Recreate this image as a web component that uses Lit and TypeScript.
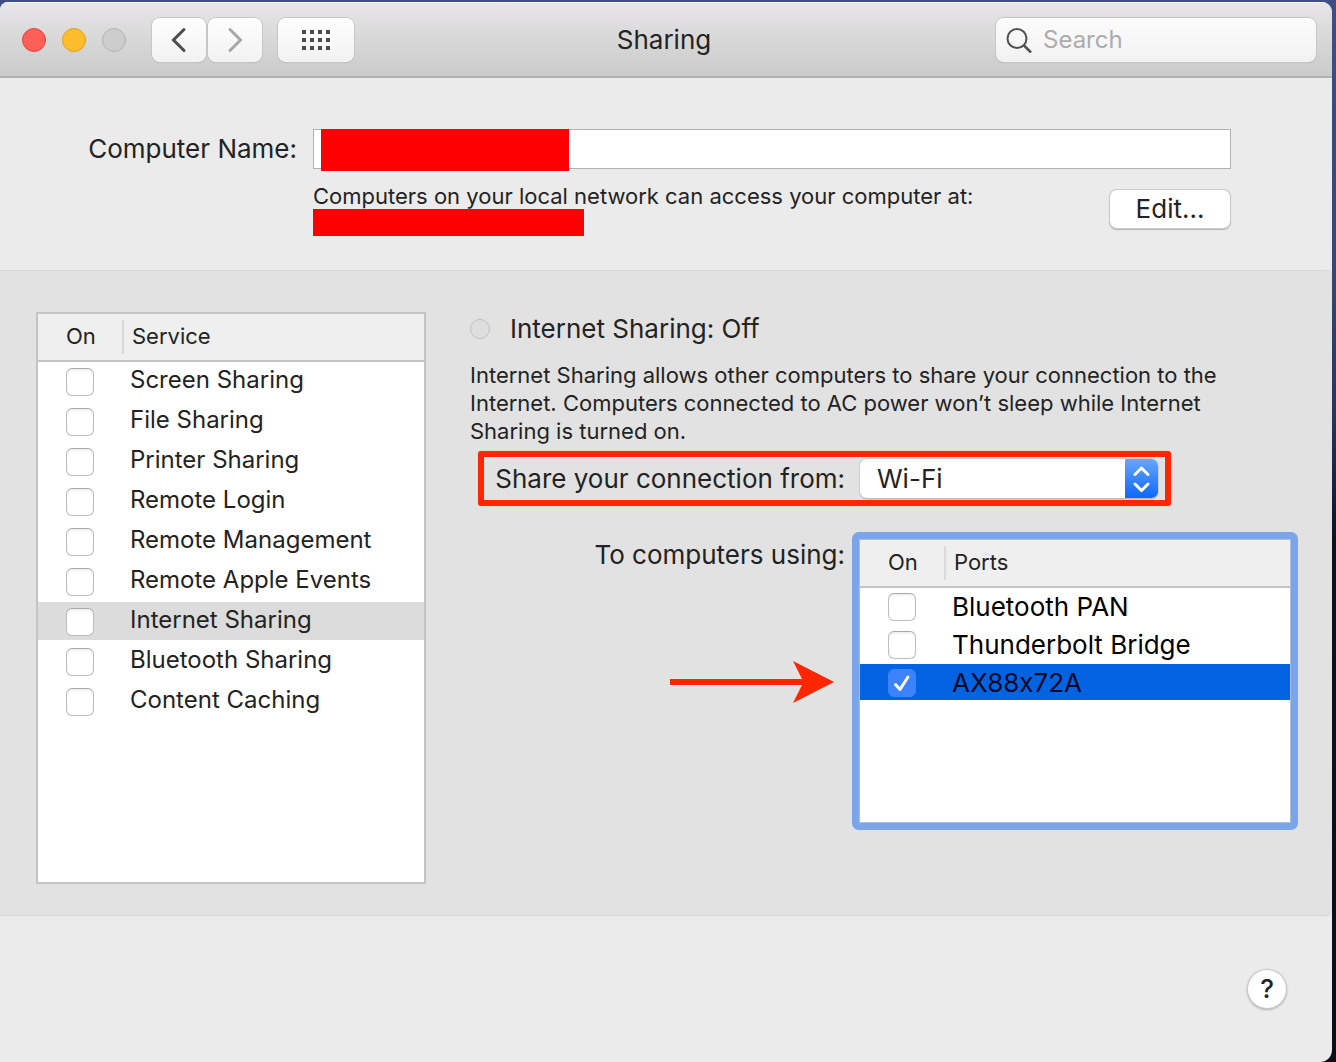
import { LitElement, html, css, svg } from "lit";
import { customElement, state } from "lit/decorators.js";
import { classMap } from "lit/directives/class-map.js";

interface Item {
  name: string;
  on: boolean;
}

const off = (name: string): Item => ({ name, on: false });

@customElement("app-root")
export class AppRoot extends LitElement {
  @state() private services: Item[] = [
    "Screen Sharing",
    "File Sharing",
    "Printer Sharing",
    "Remote Login",
    "Remote Management",
    "Remote Apple Events",
    "Internet Sharing",
    "Bluetooth Sharing",
    "Content Caching",
  ].map(off);

  @state() private ports: Item[] = [
    off("Bluetooth PAN"),
    off("Thunderbolt Bridge"),
    { name: "AX88x72A", on: true },
  ];

  static styles = css`
    :host {
      display: flex;
      box-sizing: border-box;
      min-height: 100vh;
      padding: 2px 4px 0 0;
      background: linear-gradient(#3f4f85 0, #344973 270px, #27355a 420px, #0b1226 540px, #090d1c 100%);
      font-family: Inter, "Liberation Sans", sans-serif;
      font-size: 26px;
      font-variant-ligatures: no-contextual;
      line-height: 32px;
      color: #232323;
    }
    * {
      box-sizing: border-box;
    }
    button,
    input,
    select {
      font: inherit;
      color: inherit;
      margin: 0;
      padding: 0;
    }
    .window {
      flex: 1;
      display: flex;
      flex-direction: column;
      background: #ebebeb;
      border-radius: 8px 10px 12px 0;
      overflow: hidden;
    }

    /* Title bar */
    .titlebar {
      display: grid;
      grid-template-columns: 1fr auto 1fr;
      align-items: center;
      height: 76px;
      padding: 0 16px 0 22px;
      background: linear-gradient(#e7e5e7, #cbcbcb);
      border-top: 1px solid #f6f6f6;
      border-bottom: 2px solid #b1b1b1;
    }
    .left {
      display: flex;
      align-items: center;
    }
    .lights {
      display: flex;
      gap: 16px;
      margin-right: 26px;
    }
    .light {
      width: 24px;
      height: 24px;
      border-radius: 50%;
      border: 1px solid #b4b4b4;
      background: #cdcdcd;
    }
    .close {
      background: #ff5f57;
      border-color: #e2463f;
    }
    .minimize {
      background: #ffbd2e;
      border-color: #e1a116;
    }
    .tool {
      display: flex;
      align-items: center;
      justify-content: center;
      width: 54px;
      height: 44px;
      border: 0;
      border-radius: 8px;
      background: linear-gradient(#fefefe, #f2f2f2);
      box-shadow: 0 0 0 1px #c6c6c6, 0 1px 1px #aaa;
    }
    .forward {
      margin-left: 2px;
    }
    .all {
      width: 76px;
      margin-left: 16px;
    }
    .title {
      margin: 0;
      padding-right: 10px;
      font-size: 26px;
      font-weight: 400;
    }
    .search {
      justify-self: end;
      display: flex;
      align-items: center;
      gap: 10px;
      width: 320px;
      height: 44px;
      padding: 0 10px;
      border-radius: 8px;
      background: linear-gradient(#fcfcfc, #f2f2f2);
      box-shadow: 0 0 0 1px #c6c6c6, 0 1px 1px #aaa;
    }
    .search input {
      flex: 1;
      min-width: 0;
      border: 0;
      outline: 0;
      background: none;
      font-size: 24px;
    }
    .search input::placeholder {
      color: #acacac;
      opacity: 1;
    }

    /* Computer name */
    .computer {
      display: grid;
      grid-template-columns: 297px 1fr;
      column-gap: 16px;
      row-gap: 14px;
      padding: 51px 101px 34px 0;
    }
    .computer > label {
      text-align: right;
      line-height: 40px;
    }
    .namefield {
      position: relative;
    }
    .namefield input {
      display: block;
      width: 100%;
      height: 40px;
      padding: 0 8px;
      border: 1px solid #b2b2b2;
      background: #fff;
    }
    .redact {
      background: #f00;
    }
    .redact-name {
      position: absolute;
      left: 8px;
      top: 0;
      width: 248px;
      height: 42px;
    }
    .redact-host {
      width: 271px;
      height: 27px;
    }
    .address {
      grid-column: 2;
      display: flex;
      justify-content: space-between;
      align-items: flex-start;
    }
    .small {
      margin: 0;
      font-size: 22px;
      line-height: 26px;
    }
    .edit {
      width: 120px;
      height: 38px;
      margin: 7px 1px 0 0;
      border: 0;
      border-radius: 7px;
      background: #fff;
      box-shadow: 0 0 0 1px #cacaca, 0 1px 1px 1px #b4b4b4;
    }

    /* Main panel */
    .panel {
      display: flex;
      gap: 44px;
      padding: 41px 34px 31px 36px;
      background: #e2e2e2;
      border: solid #d6d6d6;
      border-width: 1px 0;
      border-radius: 0 6px 6px 0;
    }
    .services {
      flex: 0 0 390px;
      min-height: 572px;
      border: 2px solid #c4c4c4;
      background: #fff;
    }
    table {
      width: 100%;
      border-collapse: separate;
      border-spacing: 0;
      table-layout: fixed;
    }
    th {
      height: 48px;
      padding: 0;
      background: #efefef;
      border-bottom: 2px solid #c4c4c4;
      font-size: 22px;
      font-weight: 400;
      text-align: left;
    }
    th:first-child {
      width: 84px;
    }
    th span {
      display: block;
      padding-bottom: 2px;
    }
    th:first-child span {
      padding-left: 28px;
    }
    th:last-child span {
      border-left: 2px solid #dadada;
      padding-left: 8px;
    }
    td {
      padding: 0;
      background-clip: padding-box;
      border-bottom: 2px solid #fff;
    }
    td:first-child {
      padding-left: 28px;
    }
    td:last-child {
      padding-left: 8px;
    }
    td label {
      display: block;
      white-space: nowrap;
    }
    .services td {
      height: 40px;
      font-size: 24px;
      line-height: 36px;
      vertical-align: top;
    }
    .services td:first-child {
      padding-top: 6px;
    }
    .services .selected td {
      background-color: #dcdcdc;
    }
    .check {
      appearance: none;
      display: block;
      width: 28px;
      height: 28px;
      border: 1px solid #bdbdbd;
      border-top-color: #a9a9a9;
      border-radius: 6px;
      background: #fff;
      box-shadow: inset 0 2px 2px #f0f0f0;
    }
    .check:checked {
      border-color: #3b82fb;
      box-shadow: none;
      background: #3b82fb;
    }
    .tick {
      display: grid;
      width: 28px;
    }
    .tick > * {
      grid-area: 1 / 1;
    }
    .tick svg {
      pointer-events: none;
    }

    .detail {
      flex: 1;
      min-width: 0;
      padding-top: 1px;
    }
    .status {
      display: flex;
      align-items: center;
      gap: 20px;
    }
    .status h2 {
      margin: 0;
      font-size: 26px;
      font-weight: 400;
    }
    .dot {
      width: 20px;
      height: 20px;
      border: 1px solid #c0c0c0;
      border-radius: 50%;
      background: #dedede;
    }
    .about {
      margin-top: 16px;
      line-height: 28px;
      max-width: 770px;
    }
    .source {
      display: flex;
      align-items: center;
      width: fit-content;
      margin: 6px 0 0 8px;
      padding: 2px 7px 1px 0;
      border: 6px solid #ff2600;
      border-radius: 3px;
      box-shadow: 0 0 1px #ff8a75;
    }
    .source label {
      width: 361px;
      margin-right: 15px;
      text-align: right;
    }
    .popup {
      display: grid;
      grid-template-columns: 1fr 33px;
      width: 298px;
      height: 40px;
      border-radius: 7px;
      overflow: hidden;
      background: #fff;
      border-bottom: 1px solid #bbb;
      box-shadow: 0 0 0 1px #cdcdcd;
    }
    .popup select {
      grid-area: 1 / 1 / 2 / 3;
      appearance: none;
      border: 0;
      padding-left: 17px;
      background: none;
    }
    .stepper {
      grid-area: 1 / 2;
      height: 40px;
      background: linear-gradient(#68a6fb, #0a66fb);
      pointer-events: none;
    }
    .targets {
      display: flex;
      gap: 7px;
      margin-top: 26px;
    }
    .to {
      display: flex;
      flex-direction: column;
      align-items: flex-end;
      width: 375px;
      padding-top: 7px;
    }
    .arrow {
      margin: 90px 11px 0 0;
    }
    .ports {
      flex: 1;
      height: 298px;
      padding: 1px;
      border: 7px solid #7aa5ea;
      border-radius: 7px;
      background: #fff;
      box-shadow: inset 0 0 0 1px #a9bde0;
    }
    .ports td {
      height: 38px;
      padding-top: 2px;
      color: #000;
      vertical-align: middle;
    }
    .ports .selected td {
      background-color: #0463e1;
      color: #00091f;
    }

    .footer {
      flex: 1;
      display: flex;
      justify-content: flex-end;
      align-items: flex-start;
      padding: 54px 46px 53px;
    }
    .help {
      width: 38px;
      height: 38px;
      border: 0;
      border-radius: 50%;
      background: #fff;
      box-shadow: 0 0 0 1px #cacaca, 0 1px 2px 1px #b0b0b0;
      font-weight: 500;
    }
  `;

  private toggle(list: "services" | "ports", i: number) {
    this[list] = this[list].map((it, n) => (n === i ? { ...it, on: !it.on } : it));
  }

  private renderTable(list: "services" | "ports", heading: string, selected: number) {
    return html`
      <table>
        <thead>
          <tr>
            <th scope="col"><span>On</span></th>
            <th scope="col"><span>${heading}</span></th>
          </tr>
        </thead>
        <tbody>
          ${this[list].map(
            (it, i) => html`
              <tr class=${classMap({ selected: i === selected })}>
                <td>
                  <div class="tick">
                    <input
                      class="check"
                      type="checkbox"
                      id="${list}-${i}"
                      .checked=${it.on}
                      @change=${() => this.toggle(list, i)}
                    />
                    ${it.on
                      ? html`<svg width="28" height="28" viewBox="0 0 28 28" fill="none" aria-hidden="true">
                          <path d="M7.500 15.500l4.500 5 8-12.500" stroke="#fff" stroke-width="3" stroke-linecap="round" stroke-linejoin="round" />
                        </svg>`
                      : null}
                  </div>
                </td>
                <td><label for="${list}-${i}">${it.name}</label></td>
              </tr>
            `
          )}
        </tbody>
      </table>
    `;
  }

  render() {
    return html`
      <main class="window">
        <header class="titlebar">
          <div class="left">
            <div class="lights">
              <button class="light close" aria-label="Close"></button>
              <button class="light minimize" aria-label="Minimize"></button>
              <button class="light" aria-label="Zoom" disabled></button>
            </div>
            <button class="tool" aria-label="Back">
              <svg width="20" height="28" viewBox="0 0 20 28" fill="none">
                <path d="M15 3.500L4.500 14 15 24.500" stroke="#4b4b4b" stroke-width="3" stroke-linecap="round" />
              </svg>
            </button>
            <button class="tool forward" aria-label="Forward">
              <svg width="20" height="28" viewBox="0 0 20 28" fill="none">
                <path d="M5 3.500L15.500 14 5 24.500" stroke="#a8a8a8" stroke-width="3" stroke-linecap="round" />
              </svg>
            </button>
            <button class="tool all" aria-label="Show all">
              <svg width="28" height="20" viewBox="0 0 28 20" fill="#4b4b4b">
                ${[0, 8, 16].map((y) => [0, 8, 16, 24].map((x) => svg`<rect x=${x} y=${y} width="4" height="4" />`))}
              </svg>
            </button>
          </div>
          <h1 class="title">Sharing</h1>
          <label class="search">
            <svg width="27" height="27" viewBox="0 0 27 27" fill="none" stroke="#505050" stroke-width="2" aria-hidden="true">
              <circle cx="11" cy="12.500" r="9.500" />
              <path d="M18 19.500l7 7" stroke-width="2.500" />
            </svg>
            <input type="text" placeholder="Search" aria-label="Search" />
          </label>
        </header>

        <section class="computer">
          <label for="name">Computer Name:</label>
          <div class="namefield">
            <input id="name" type="text" />
            <div class="redact redact-name"></div>
          </div>
          <div class="address">
            <div>
              <p class="small">Computers on your local network can access your computer at:</p>
              <div class="redact redact-host"></div>
            </div>
            <button class="edit">Edit...</button>
          </div>
        </section>

        <section class="panel">
          <div class="services">${this.renderTable("services", "Service", 6)}</div>
          <div class="detail">
            <div class="status">
              <span class="dot"></span>
              <h2>Internet Sharing: Off</h2>
            </div>
            <p class="small about">
              Internet Sharing allows other computers to share your connection to the Internet. Computers connected to
              AC power won’t sleep while Internet Sharing is turned on.
            </p>
            <div class="source">
              <label for="source">Share your connection from:</label>
              <div class="popup">
                <select id="source">
                  <option>Wi-Fi</option>
                </select>
                <svg class="stepper" width="33" height="40" viewBox="0 0 33 40" fill="none" stroke="#fff" stroke-width="3" stroke-linecap="round" stroke-linejoin="round" aria-hidden="true">
                  <path d="M10 15.500l6.500-6.500 6.500 6.500M10 25l6.500 6.500 6.500-6.500" />
                </svg>
              </div>
            </div>
            <div class="targets">
              <div class="to">
                <span>To computers using:</span>
                <svg class="arrow" width="164" height="42" viewBox="0 0 164 42" fill="#ff2600" aria-hidden="true">
                  <path d="M0 18h132L123 0l41 21-41 21 9-18H0z" />
                </svg>
              </div>
              <div class="ports">${this.renderTable("ports", "Ports", 2)}</div>
            </div>
          </div>
        </section>

        <footer class="footer">
          <button class="help" aria-label="Help">?</button>
        </footer>
      </main>
    `;
  }
}
